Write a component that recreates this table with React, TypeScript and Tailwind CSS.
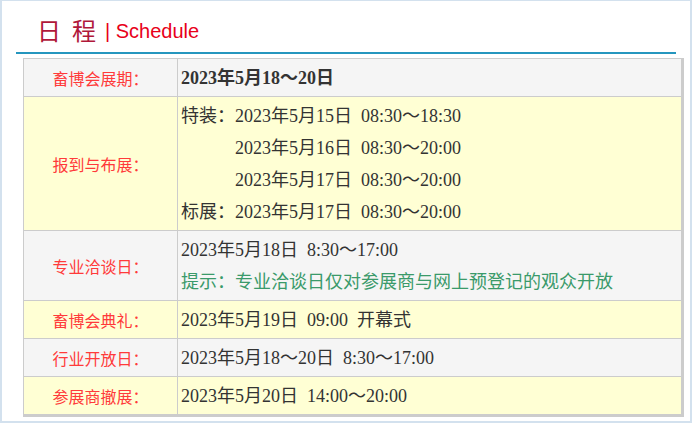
import React from 'react'

type Row = {
  label: string
  lines: React.ReactNode[]
  bg: string
}

const serif = { fontFamily: '"Liberation Serif", "Noto Sans CJK SC", serif' }

const rows: Row[] = [
  {
    label: '畜博会展期：',
    lines: [<span className="font-bold">2023年5月18～20日</span>],
    bg: 'bg-[#f5f5f5]',
  },
  {
    label: '报到与布展：',
    lines: [
      '特装：2023年5月15日\u200208:30～18:30',
      '　　　2023年5月16日\u200208:30～20:00',
      '　　　2023年5月17日\u200208:30～20:00',
      '标展：2023年5月17日\u200208:30～20:00',
    ],
    bg: 'bg-[#ffffd4]',
  },
  {
    label: '专业洽谈日：',
    lines: [
      '2023年5月18日\u20028:30～17:00',
      <span className="text-[#3a9a6a]">提示：专业洽谈日仅对参展商与网上预登记的观众开放</span>,
    ],
    bg: 'bg-[#f5f5f5]',
  },
  {
    label: '畜博会典礼：',
    lines: ['2023年5月19日\u200209:00\u2002开幕式'],
    bg: 'bg-[#ffffd4]',
  },
  {
    label: '行业开放日：',
    lines: ['2023年5月18～20日\u20028:30～17:00'],
    bg: 'bg-[#f5f5f5]',
  },
  {
    label: '参展商撤展：',
    lines: ['2023年5月20日\u200214:00～20:00'],
    bg: 'bg-[#ffffd4]',
  },
]

export default function App() {
  return (
    <div className="w-[692px] h-[423px] border-2 border-t border-[#d3e1ee] bg-white overflow-hidden">
      <div className="mx-[14px] border-b-2 border-[#2596be] pl-[21px] pt-[17px] pb-[10px] flex items-end">
        <span
          className="text-[24px] leading-[24px] text-[#b0183a]"
          style={{ fontFamily: '"Noto Sans CJK SC", serif' }}
        >
          <span className="mr-[11px]">日</span>程
        </span>
        <span
          className="ml-[9px] text-[20px] leading-[22px] text-[#e8001a]"
          style={{ fontFamily: '"Liberation Sans", Arial, sans-serif' }}
        >
          | Schedule
        </span>
      </div>

      <div className="ml-[21px] mr-[6px] mt-[4px] border-r-2 border-b-2 border-[#cccccc]">
        <table className="w-full border-collapse">
          <tbody>
            {rows.map((row, i) => (
              <tr key={i} className={row.bg}>
                <td
                  className="w-[154px] border border-[#cccccc] text-center text-[16px] text-[#ff3a3a] py-[2.5px] leading-[32px]"
                  style={{ fontFamily: '"Noto Sans CJK SC", serif' }}
                >
                  {row.label}
                </td>
                <td
                  className="border border-[#cccccc] pl-[3px] py-[2.5px] text-[18px] leading-[32px] text-[#333333] whitespace-pre"
                  style={serif}
                >
                  {row.lines.map((line, j) => (
                    <div key={j}>{line}</div>
                  ))}
                </td>
              </tr>
            ))}
          </tbody>
        </table>
      </div>
    </div>
  )
}
